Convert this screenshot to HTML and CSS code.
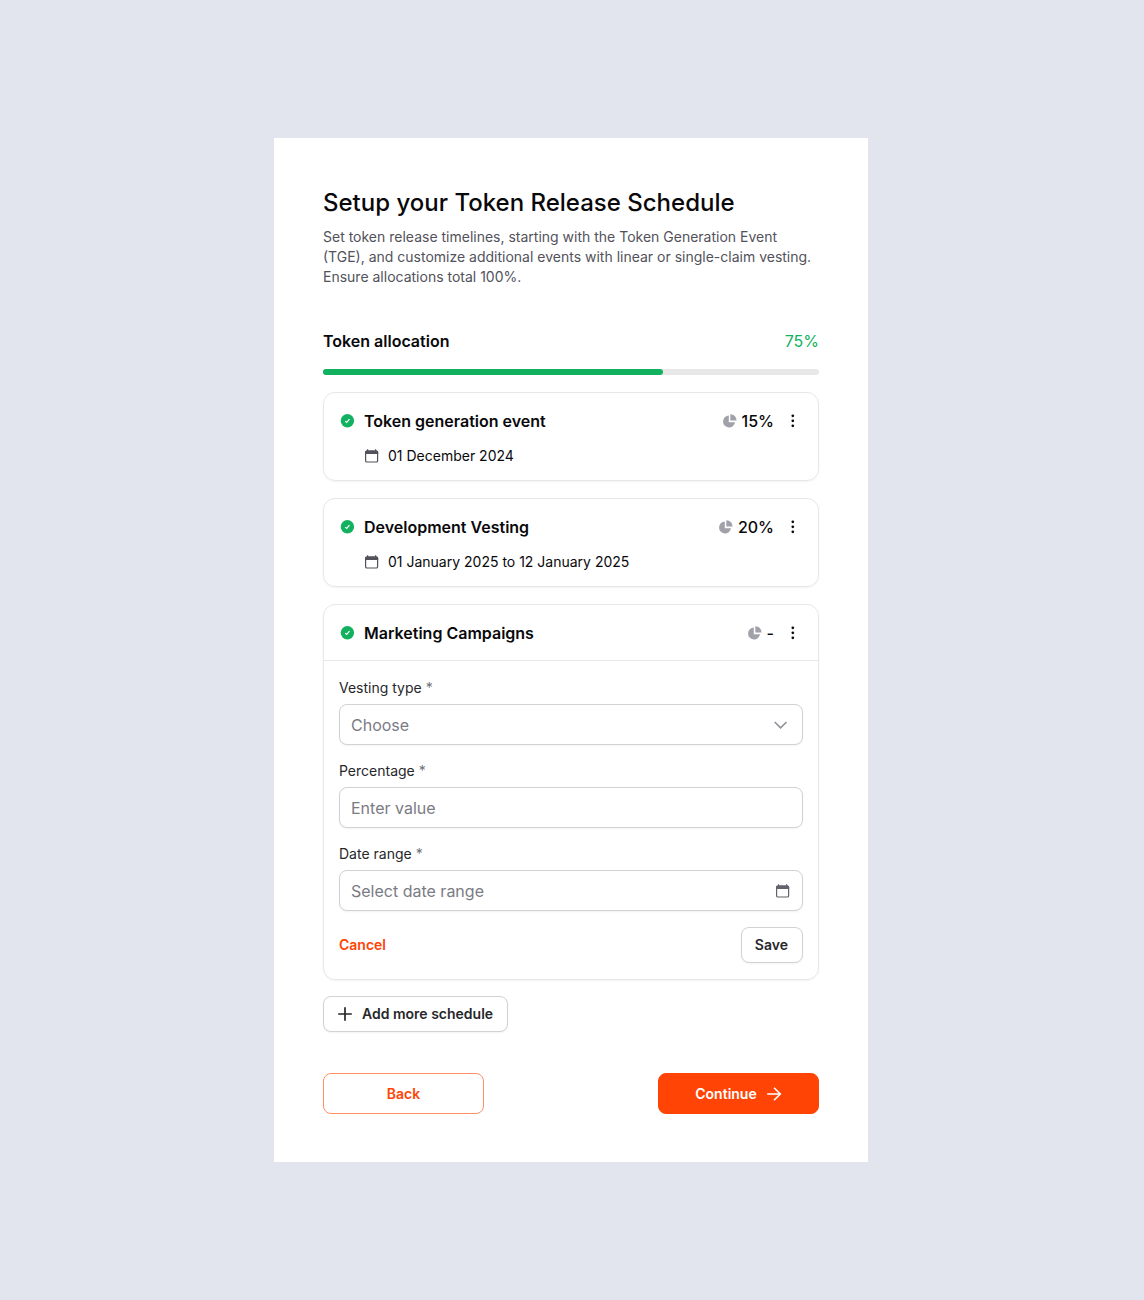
FILE: index.html
```html
<!DOCTYPE html>
<html lang="en">
<head>
<meta charset="utf-8">
<meta name="viewport" content="width=device-width, initial-scale=1">
<title>Token Release Schedule</title>
<link rel="stylesheet" href="styles.css">
</head>
<body>
<svg class="sprite" aria-hidden="true">
  <symbol id="i-check" viewBox="0 0 16 16"><circle cx="7.4" cy="7.8" r="6.7" fill="#12b15f"/><path d="M5.200 8.100l1.500 1.400 2.800-3.300" fill="none" stroke="#fff" stroke-width="1.200"/></symbol>
  <symbol id="i-pie" viewBox="0 0 16 16"><path d="M6.800 2.500A6 6 0 1 0 13 9.300H6.800z" fill="#a1a1aa"/><path d="M8.300 1.200a6 6 0 0 1 6.200 6.400H8.300z" fill="#a1a1aa"/></symbol>
  <symbol id="i-dots" viewBox="0 0 18 18"><g fill="currentColor"><circle cx="8.800" cy="3.800" r="1.350"/><circle cx="8.800" cy="8.800" r="1.350"/><circle cx="8.800" cy="13.800" r="1.350"/></g></symbol>
  <symbol id="i-calendar" viewBox="0 0 16 16"><rect x="1.6" y="3" width="12" height="11" rx="1.3" fill="none" stroke="currentColor" stroke-width="1.2"/><path d="M1 6V4a1.6 1.6 0 0 1 1.6-1.6h10A1.6 1.6 0 0 1 14.200 4v2zM3 1.200h1.200V3H3zM11 1.200h1.200V3H11z" fill="currentColor"/></symbol>
  <symbol id="i-chevron" viewBox="0 0 16 16"><path d="M1.700 5L7.600 10.900 13.500 5" fill="none" stroke="currentColor" stroke-width="1.500"/></symbol>
  <symbol id="i-plus" viewBox="0 0 16 16"><path d="M8 1.200v13.600M1.200 8h13.600" fill="none" stroke="currentColor" stroke-width="1.700"/></symbol>
  <symbol id="i-arrow" viewBox="0 0 16 16"><path d="M1.200 8h13M8 1.700L14.300 8 8 14.300" fill="none" stroke="currentColor" stroke-width="1.600"/></symbol>
</svg>
<main class="panel">
  <header class="intro">
    <h1 class="title">Setup your Token Release Schedule</h1>
    <p class="lead">Set token release timelines, starting with the Token Generation Event (TGE), and customize additional events with linear or single-claim vesting. Ensure allocations total 100%.</p>
  </header>

  <section class="allocation">
    <div class="allocation-head">
      <h2 class="allocation-title">Token allocation</h2>
      <span class="allocation-value">75%</span>
    </div>
    <div class="track"><div class="fill"></div></div>
  </section>

  <div class="cards">
    <article class="card">
      <div class="card-head">
        <svg class="icon"><use href="#i-check"/></svg>
        <h3 class="card-title">Token generation event</h3>
        <span class="share"><svg class="icon"><use href="#i-pie"/></svg>15%</span>
        <button class="menu" type="button" aria-label="More options"><svg class="dots"><use href="#i-dots"/></svg></button>
      </div>
      <p class="date"><svg class="icon date-icon"><use href="#i-calendar"/></svg>01 December 2024</p>
    </article>

    <article class="card">
      <div class="card-head">
        <svg class="icon"><use href="#i-check"/></svg>
        <h3 class="card-title">Development Vesting</h3>
        <span class="share"><svg class="icon"><use href="#i-pie"/></svg>20%</span>
        <button class="menu" type="button" aria-label="More options"><svg class="dots"><use href="#i-dots"/></svg></button>
      </div>
      <p class="date"><svg class="icon date-icon"><use href="#i-calendar"/></svg>01 January 2025 to 12 January 2025</p>
    </article>

    <article class="card">
      <div class="card-head card-head-divided">
        <svg class="icon"><use href="#i-check"/></svg>
        <h3 class="card-title">Marketing Campaigns</h3>
        <span class="share"><svg class="icon"><use href="#i-pie"/></svg>-</span>
        <button class="menu" type="button" aria-label="More options"><svg class="dots"><use href="#i-dots"/></svg></button>
      </div>
      <form class="form">
        <div class="field">
          <label class="label" for="type">Vesting type<span class="required">*</span></label>
          <div class="control">
            <select class="input" id="type"><option>Choose</option></select>
            <svg class="icon control-icon chevron"><use href="#i-chevron"/></svg>
          </div>
        </div>
        <div class="field">
          <label class="label" for="percentage">Percentage<span class="required">*</span></label>
          <div class="control"><input class="input" id="percentage" type="text" placeholder="Enter value"></div>
        </div>
        <div class="field">
          <label class="label" for="range">Date range<span class="required">*</span></label>
          <div class="control">
            <input class="input" id="range" type="text" placeholder="Select date range">
            <svg class="icon control-icon"><use href="#i-calendar"/></svg>
          </div>
        </div>
        <div class="form-actions">
          <button class="link-button" type="button">Cancel</button>
          <button class="button button-small" type="button">Save</button>
        </div>
      </form>
    </article>
  </div>

  <button class="button button-small add" type="button"><svg class="icon"><use href="#i-plus"/></svg>Add more schedule</button>

  <footer class="footer">
    <button class="button button-large button-outline" type="button">Back</button>
    <button class="button button-large button-primary" type="button">Continue<svg class="icon"><use href="#i-arrow"/></svg></button>
  </footer>
</main>
</body>
</html>
```
FILE: styles.css
```css
* {
  box-sizing: border-box;
}

body {
  margin: 0;
  min-height: 100vh;
  padding: 24px 2px 24px 0;
  display: flex;
  align-items: center;
  justify-content: center;
  background: #e2e5ed;
  color: #09090b;
  font-family: Inter, "Liberation Sans", sans-serif;
  font-size: 14px;
  line-height: 20px;
}

h1, h2, h3, p {
  margin: 0;
}

button, input, select {
  font: inherit;
}

button {
  cursor: pointer;
}

.sprite {
  position: absolute;
  width: 0;
  height: 0;
}

.icon {
  width: 16px;
  height: 16px;
  flex: none;
}

.panel {
  width: 100%;
  max-width: 594px;
  padding: 49px 49px 48px;
  background: #fff;
}

.title {
  font-size: 24px;
  font-weight: 500;
  line-height: 32px;
}

.lead {
  margin-top: 8px;
  color: #52525b;
}

.allocation {
  margin-top: 42px;
}

.allocation-head {
  display: flex;
  justify-content: space-between;
  font-size: 16px;
  line-height: 24px;
}

.allocation-title {
  font-size: 16px;
  font-weight: 600;
}

.allocation-value {
  color: #12b15f;
}

.track {
  height: 6px;
  margin-top: 16px;
  border-radius: 3px;
  background: #e8e8e9;
}

.fill {
  width: 68.5%;
  height: 100%;
  border-radius: 3px;
  background: #12b15f;
}

.cards {
  display: flex;
  flex-direction: column;
  gap: 17px;
  margin-top: 17px;
}

.card {
  border: 1px solid #e7e7e9;
  border-radius: 12px;
  box-shadow: 0 1px 2px rgba(0, 0, 0, 0.05);
}

.card-head {
  display: flex;
  align-items: center;
  padding: 16px 16px 13px;
  font-size: 16px;
  line-height: 24px;
}

.card-head-divided {
  padding-bottom: 15px;
  border-bottom: 1px solid #e7e7e9;
}

.card-title {
  flex: 1;
  margin-left: 8px;
  font-size: 16px;
  font-weight: 600;
}

.share {
  display: flex;
  align-items: center;
  gap: 4px;
  font-weight: 500;
}

.menu {
  display: flex;
  margin-left: 10px;
  padding: 0;
  border: 0;
  background: none;
  color: #09090b;
}

.dots {
  width: 18px;
  height: 18px;
}

.date {
  display: flex;
  align-items: center;
  gap: 8px;
  padding: 0 16px 14px 40px;
}

.date-icon {
  color: #52525b;
}

.form {
  display: flex;
  flex-direction: column;
  gap: 16px;
  padding: 17px 15px 16px;
}

.field {
  display: flex;
  flex-direction: column;
  gap: 6px;
}

.label {
  display: flex;
  gap: 4px;
  color: #27272a;
}

.required {
  color: #71717a;
}

.control {
  display: grid;
  align-items: center;
}

.input {
  grid-area: 1 / 1;
  width: 100%;
  height: 41px;
  padding: 0 11px;
  border: 1px solid #d1d1d6;
  border-radius: 8px;
  background: #fff;
  color: #7b7b84;
  font-size: 16px;
  line-height: 24px;
  appearance: none;
  box-shadow: 0 1px 2px rgba(0, 0, 0, 0.05);
}

.input::placeholder {
  color: #7b7b84;
  opacity: 1;
}

.control-icon {
  grid-area: 1 / 1;
  justify-self: end;
  margin-right: 12px;
  color: #63636b;
  pointer-events: none;
}

.chevron {
  margin-right: 14px;
  color: #8e8e96;
}

.form-actions {
  display: flex;
  align-items: center;
  justify-content: space-between;
}

.link-button {
  padding: 0;
  border: 0;
  background: none;
  color: #ff4405;
  font-weight: 600;
}

.button {
  display: flex;
  align-items: center;
  justify-content: center;
  gap: 9px;
  border: 1px solid #d1d1d6;
  border-radius: 8px;
  background: #fff;
  color: #27272a;
  font-weight: 600;
}

.button-small {
  padding: 7px 14px 7px 13px;
  box-shadow: 0 1px 2px rgba(0, 0, 0, 0.05);
}

.add {
  margin-top: 16px;
}

.footer {
  display: flex;
  justify-content: space-between;
  gap: 16px;
  margin-top: 41px;
}

.button-large {
  width: 161px;
  height: 41px;
}

.button-outline {
  border-color: #ff9066;
  color: #ff4405;
}

.button-primary {
  border-color: #ff4405;
  background: #ff4405;
  color: #fff;
}
```
